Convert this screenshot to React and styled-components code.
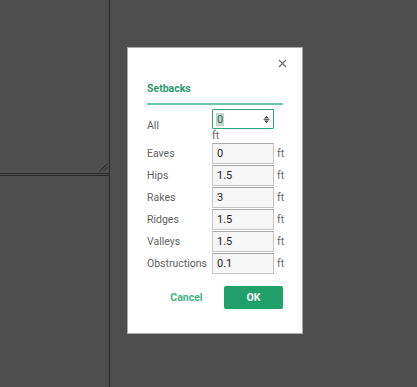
import React from "react";
import styled, { createGlobalStyle } from "styled-components";

const Global = createGlobalStyle`
  html, body { margin: 0; padding: 0; background: #4e4e4e; }
  body { font-family: Roboto, "Liberation Sans", Arial, sans-serif; }
  * { box-sizing: border-box; }
`;

const Page = styled.div`
  position: relative;
  display: flex;
  width: 417px;
  height: 387px;
  background: #4e4e4e;
  overflow: hidden;
`;

const LeftColumn = styled.div`
  display: flex;
  flex-direction: column;
  width: 110px;
  border-right: 1px solid #2a2a2a;
`;

const TopPanel = styled.div`
  position: relative;
  height: 174px;
  border-bottom: 1px solid #2a2a2a;
`;

const BottomPanel = styled.div`
  flex: 1;
  margin-top: 1px;
  border-top: 1px solid #2a2a2a;
`;

const Handle = styled.svg`
  position: absolute;
  right: 1px;
  bottom: 1px;
`;

const Canvas = styled.div`
  flex: 1;
`;

const Dialog = styled.div`
  position: absolute;
  left: 127px;
  top: 47px;
  width: 176px;
  height: 287px;
  background: #fff;
  border: 1px solid #a8a8a8;
  padding: 0 19px;
  display: flex;
  flex-direction: column;
`;

const CloseRow = styled.div`
  display: flex;
  justify-content: flex-end;
  height: 27px;
  padding-top: 11px;
`;

const CloseButton = styled.button`
  border: 0;
  background: none;
  padding: 0;
  width: 9px;
  height: 9px;
  margin-right: -4px;
  cursor: pointer;
  display: flex;
`;

const Tab = styled.div`
  border-bottom: 2px solid #6cc6a3;
  height: 30px;
  padding-top: 8px;
  font-size: 10.5px;
  font-weight: 700;
  color: #2b9c6e;
  line-height: 12px;
`;

const Form = styled.div`
  display: grid;
  grid-template-columns: 65px 62px auto;
  row-gap: 1px;
  margin-top: 4px;
  align-items: center;
`;

const Label = styled.div`
  font-size: 10.5px;
  color: #626262;
  line-height: 21px;
`;

const Unit = styled.div`
  font-size: 10.5px;
  color: #6a6a6a;
  padding-left: ${(p) => (p.$below ? "0" : "3px")};
  margin-top: ${(p) => (p.$below ? "1px" : "0")};
  line-height: 12px;
`;

const Stack = styled.div`
  display: flex;
  flex-direction: column;
`;

const Field = styled.input`
  width: 62px;
  height: 21px;
  border: 1px solid #c4c4c4;
  border-top-color: #a9a9a9;
  background: #f6f6f6;
  font-family: inherit;
  font-size: 11px;
  color: #222;
  padding: 0 4px;
  outline: none;
  margin: 0;
`;

const FocusedField = styled.div`
  width: 62px;
  height: 20px;
  border: 1.5px solid #33a275;
  border-radius: 1px;
  background: #fff;
  display: flex;
  align-items: center;
  justify-content: space-between;
  padding: 0 3px 0 3px;
  font-size: 11px;
  color: #222;
`;

const Selected = styled.span`
  background: #b9dccc;
  color: #555;
  padding: 0 1px;
  line-height: 13px;
`;

const Spinner = styled.svg`
  display: block;
`;

const Buttons = styled.div`
  display: flex;
  justify-content: flex-end;
  gap: 8px;
  margin-top: 12px;
`;

const Button = styled.button`
  width: 59px;
  height: 23px;
  border: 0;
  border-radius: 2px;
  font-family: inherit;
  font-size: 10.5px;
  font-weight: 700;
  cursor: pointer;
  background: ${(p) => (p.$primary ? "#22a06b" : "transparent")};
  color: ${(p) => (p.$primary ? "#ffffff" : "#46b386")};
`;

const rows = [
  ["Eaves", "0"],
  ["Hips", "1.5"],
  ["Rakes", "3"],
  ["Ridges", "1.5"],
  ["Valleys", "1.5"],
  ["Obstructions", "0.1"],
];

export default function App() {
  return (
    <>
      <Global />
      <Page>
        <LeftColumn>
          <TopPanel>
            <Handle width="9" height="9" viewBox="0 0 9 9">
              <line x1="0.5" y1="8.5" x2="8.5" y2="0.5" stroke="#262626" strokeWidth="1" />
              <line x1="4" y1="8.5" x2="8.5" y2="4" stroke="#262626" strokeWidth="1" />
            </Handle>
          </TopPanel>
          <BottomPanel />
        </LeftColumn>
        <Canvas />
        <Dialog>
          <CloseRow>
            <CloseButton aria-label="Close">
              <svg width="9" height="9" viewBox="0 0 9 9">
                <path d="M1 1 L8 8 M8 1 L1 8" stroke="#6a6a6a" strokeWidth="1.2" />
              </svg>
            </CloseButton>
          </CloseRow>
          <Tab>Setbacks</Tab>
          <Form>
            <Label>All</Label>
            <Stack>
              <FocusedField>
                <Selected>0</Selected>
                <Spinner width="7" height="9" viewBox="0 0 7 9">
                  <path d="M1 3.5 L3.5 1 L6 3.5 Z M1 5.5 L3.5 8 L6 5.5 Z" fill="#444" />
                  <line x1="0.5" y1="4.5" x2="6.5" y2="4.5" stroke="#444" strokeWidth="0.8" />
                </Spinner>
              </FocusedField>
              <Unit $below>ft</Unit>
            </Stack>
            <div />
            {rows.map(([label, value]) => (
              <React.Fragment key={label}>
                <Label>{label}</Label>
                <Field readOnly value={value} />
                <Unit>ft</Unit>
              </React.Fragment>
            ))}
          </Form>
          <Buttons>
            <Button>Cancel</Button>
            <Button $primary>OK</Button>
          </Buttons>
        </Dialog>
      </Page>
    </>
  );
}
